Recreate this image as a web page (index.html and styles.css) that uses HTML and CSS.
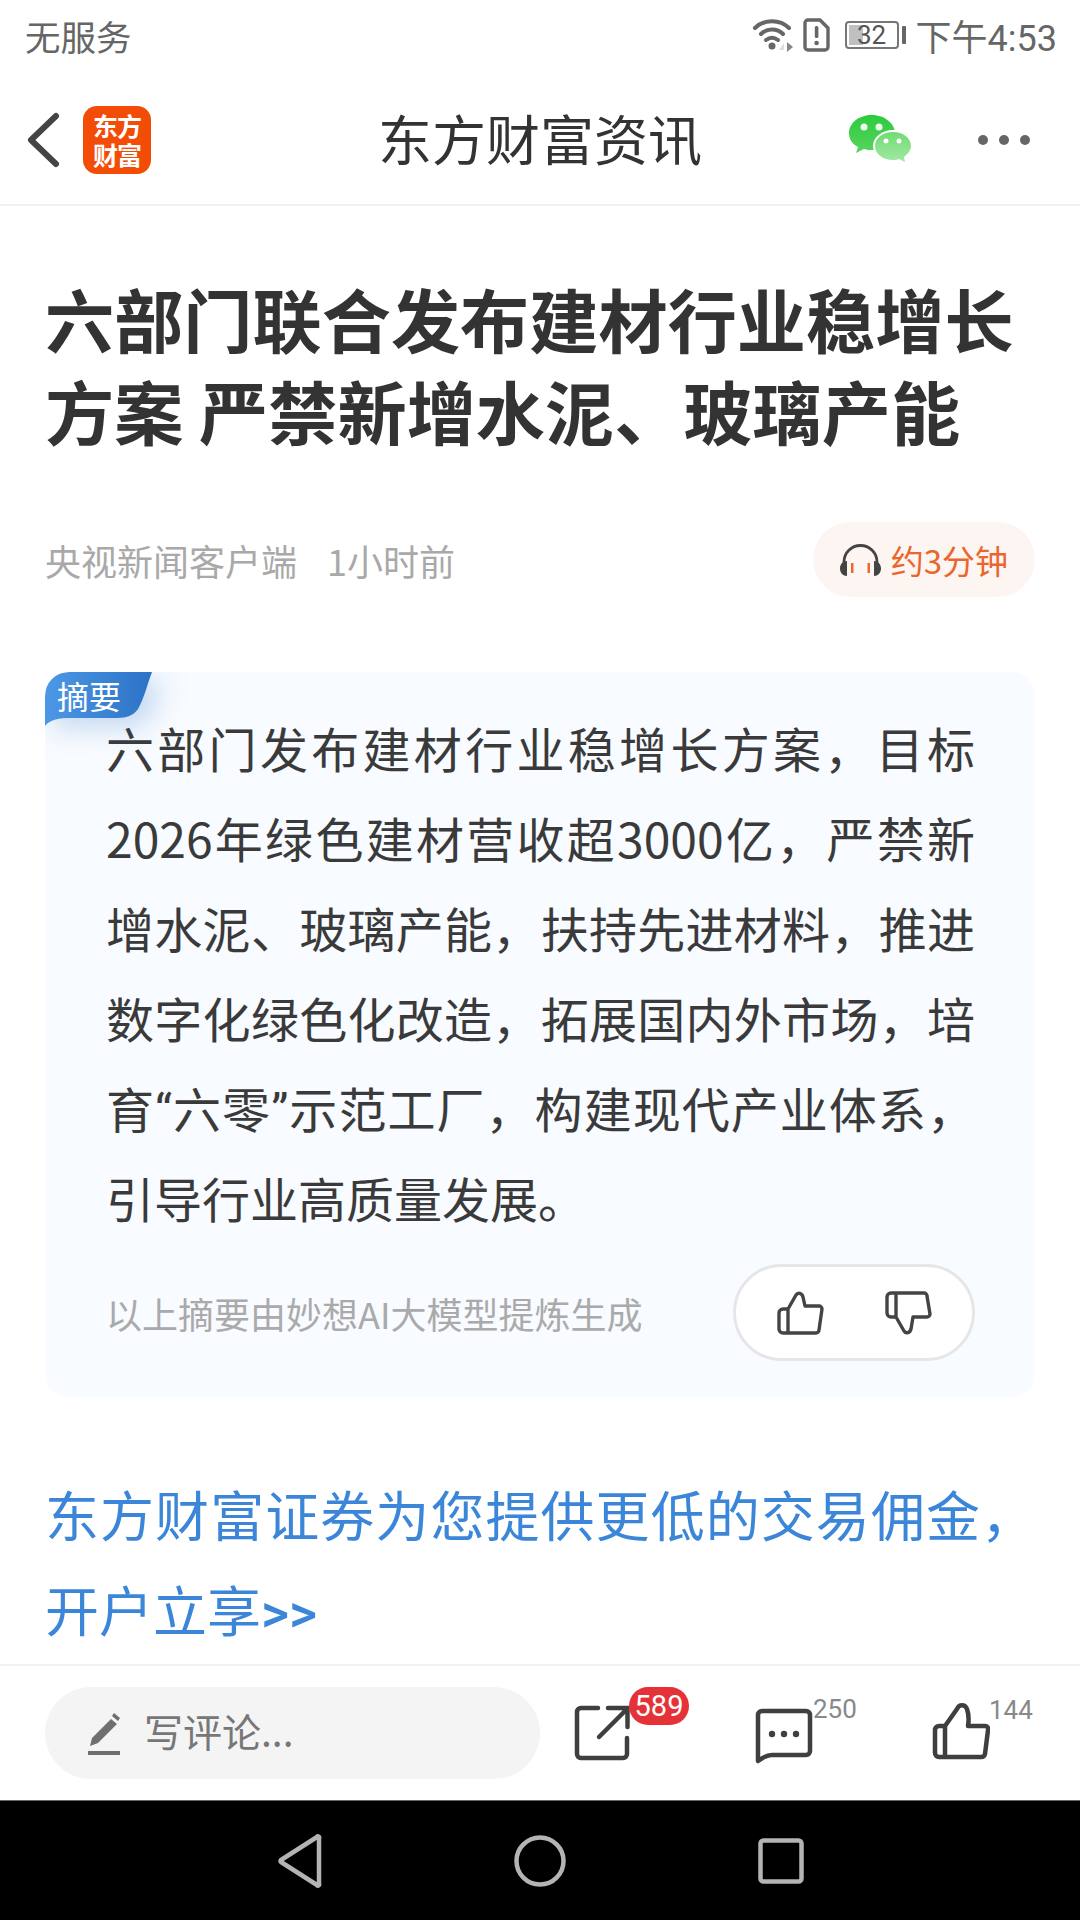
FILE: index.html
```html
<!DOCTYPE html>
<html lang="zh-CN">
<head>
<meta charset="utf-8">
<title>东方财富资讯</title>
<link rel="stylesheet" href="styles.css">
</head>
<body>
<div class="screen">
  <div class="status">
    <span class="carrier">无服务</span>
    <div class="status-right">
      <svg class="ic-wifi" width="42" height="36" viewBox="0 0 42 36"><g fill="none" stroke="#666" stroke-width="4" stroke-linecap="round"><path d="M3 11C12 2 28 2 37 11"/><path d="M9 17C15 11 25 11 31 17"/><path d="M14 23C18 20 22 20 26 23"/></g><circle cx="20" cy="29" r="3.5" fill="#666"/><path d="M27 33l5-7v7z" fill="#ddd"/><path d="M35 25l6 5-6 5z" fill="#888"/></svg>
      <svg class="ic-sim" width="27" height="34" viewBox="0 0 27 34"><path d="M5 2h12l8 8v19a3 3 0 0 1-3 3H5a3 3 0 0 1-3-3V5a3 3 0 0 1 3-3z" fill="none" stroke="#666" stroke-width="3.4"/><rect x="11.800" y="8" width="3.600" height="12" rx="1.500" fill="#666"/><circle cx="13.600" cy="25" r="2.300" fill="#666"/></svg>
      <div class="battery"><div class="batt-body"><span class="batt-fill"></span><span class="batt-num">32</span></div><span class="batt-cap"></span></div>
      <span class="clock">下午4:53</span>
    </div>
  </div>

  <div class="nav">
    <div class="nav-left">
      <svg width="36" height="56" viewBox="0 0 36 56"><path d="M31 4L6 28l25 24" fill="none" stroke="#444" stroke-width="6" stroke-linecap="round" stroke-linejoin="round"/></svg>
      <div class="logo"><span>东方</span><span>财富</span></div>
    </div>
    <h1 class="nav-title">东方财富资讯</h1>
    <div class="nav-right">
      <svg width="66" height="56" viewBox="0 0 66 56"><defs><linearGradient id="g1" x1="0" y1="0" x2="0" y2="1"><stop offset="0" stop-color="#2ccb3d"/><stop offset="1" stop-color="#59d45f"/></linearGradient><linearGradient id="g2" x1="0" y1="0" x2="0" y2="1"><stop offset="0" stop-color="#6fdc72"/><stop offset="1" stop-color="#a3e9a3"/></linearGradient></defs><path d="M24 3C11 3 1 11 1 21c0 6 3 11 9 14l-2 6 8-4c3 1 5 1 8 1 13 0 23-8 23-17S37 3 24 3z" fill="url(#g1)"/><circle cx="16" cy="15" r="3.500" fill="#fff" opacity=".9"/><circle cx="31" cy="15" r="3.500" fill="#fff" opacity=".9"/><path d="M45 18c-11 0-20 7-20 16s9 16 20 16c2 0 4 0 6-1l7 4-2-6c5-3 8-8 8-13 0-9-8-16-19-16z" fill="#fff"/><path d="M45 20c-10 0-18 6-18 14s8 14 18 14c2 0 4 0 6-1l6 3-1-5c4-3 7-7 7-11 0-8-8-14-18-14z" fill="url(#g2)"/><circle cx="38" cy="29" r="2.500" fill="#fff"/><circle cx="51" cy="29" r="2.500" fill="#fff"/></svg>
      <div class="dots"><i></i><i></i><i></i></div>
    </div>
  </div>

  <main class="article">
    <h2 class="headline">六部门联合发布建材行业稳增长<br>方案 严禁新增水泥、玻璃产能</h2>
    <div class="meta">
      <span class="source">央视新闻客户端</span>
      <span class="time">1小时前</span>
      <div class="listen">
        <svg width="41" height="34" viewBox="0 0 41 34"><path d="M4 24V19a16.500 16.500 0 0 1 33 0v5" fill="none" stroke="#444" stroke-width="2.800"/><path d="M7 18v15c-4 0-7-3-7-7.500S3 18 7 18zM34 18v15c4 0 7-3 7-7.500S38 18 34 18z" fill="#444"/><rect x="11" y="20" width="2.500" height="10" fill="#ea6a2e"/><rect x="27.500" y="20" width="2.500" height="10" fill="#ea6a2e"/></svg>
        <span>约3分钟</span>
      </div>
    </div>

    <section class="summary">
      <div class="summary-tag">
        <svg class="tag-shape" width="108" height="56" viewBox="0 0 108 56"><defs><linearGradient id="tagfill" x1="0" y1="0" x2="1" y2="0"><stop offset="0" stop-color="#4d98e6"/><stop offset="1" stop-color="#2c72c6"/></linearGradient></defs><path d="M0 24Q0 0 24 0H107C102 13 99 27 93 37 89 43 82 46 72 46H22C10 46 3 50 0 54z" fill="url(#tagfill)"/></svg>
        <span class="tag-label">摘要</span>
      </div>
      <p class="summary-text">
        <span>六部门发布建材行业稳增长方案，目标</span>
        <span>2026年绿色建材营收超3000亿，严禁新</span>
        <span>增水泥、玻璃产能，扶持先进材料，推进</span>
        <span>数字化绿色化改造，拓展国内外市场，培</span>
        <span>育<b class="latin">“</b>六零<b class="latin">”</b>示范工厂，构建现代产业体系，</span>
        <span class="last">引导行业高质量发展。</span>
      </p>
      <div class="summary-foot">
        <span class="ai-note">以上摘要由妙想AI大模型提炼生成</span>
        <div class="vote">
          <svg width="48" height="48" viewBox="0 0 48 48"><path d="M12 20h-5a4 4 0 0 0-4 4v16a4 4 0 0 0 4 4h33a3 3 0 0 0 3-3l3-21a3 3 0 0 0-3-3H29l-2-9c-1-4-5-5-7-2zM12 20v24" fill="none" stroke="#444" stroke-width="3.400" stroke-linejoin="round"/></svg>
          <svg width="48" height="48" viewBox="0 0 48 48"><path d="M36 28h5a4 4 0 0 0 4-4V8a4 4 0 0 0-4-4H8a3 3 0 0 0-3 3L2 25a3 3 0 0 0 3 3h14l2 12c1 4 5 5 7 2zM13 4v0M36 28V4" transform="matrix(-1 0 0 1 48 0)" fill="none" stroke="#444" stroke-width="3.400" stroke-linejoin="round"/></svg>
        </div>
      </div>
    </section>

    <p class="promo"><span class="promo-line">东方财富证券为您提供更低的交易佣金，</span><span>开户立享<b class="latin">&gt;&gt;</b></span></p>
  </main>

  <div class="toolbar">
    <div class="comment-input">
      <svg width="38" height="46" viewBox="0 0 38 46"><path d="M26 9l6 5L13 33l-8 3 2-8zM29 3l6 5-2 3-6-5z" fill="#6f6f6f"/><rect x="3" y="41" width="32" height="4" fill="#6f6f6f"/></svg>
      <span>写评论...</span>
    </div>
    <div class="tool tool-share">
      <svg width="58" height="58" viewBox="0 0 58 58"><path d="M24 4H7a4 4 0 0 0-4 4v42a4 4 0 0 0 4 4h42a4 4 0 0 0 4-4V34" fill="none" stroke="#3f3f3f" stroke-width="4.500" stroke-linecap="round"/><path d="M25 33L53 5M34 4h19.500v19" fill="none" stroke="#3f3f3f" stroke-width="4.500" stroke-linecap="round"/></svg>
      <span class="badge">589</span>
    </div>
    <div class="tool tool-comment">
      <svg width="58" height="56" viewBox="0 0 58 56"><path d="M7 3h44a4 4 0 0 1 4 4v36a4 4 0 0 1-4 4H17c-5 0-10 3-14 6V7a4 4 0 0 1 4-4z" fill="none" stroke="#3f3f3f" stroke-width="4.500" stroke-linejoin="round"/><circle cx="17" cy="26" r="3.200" fill="#3f3f3f"/><circle cx="29" cy="26" r="3.200" fill="#3f3f3f"/><circle cx="41" cy="26" r="3.200" fill="#3f3f3f"/></svg>
      <span class="count">250</span>
    </div>
    <div class="tool tool-like">
      <svg width="58" height="58" viewBox="0 0 58 58"><path d="M13 24H7a4 4 0 0 0-4 4v23a4 4 0 0 0 4 4h42a4 4 0 0 0 4-3l3-24a3 3 0 0 0-3-4H36c1-6 1-11-1-17-2-5-8-5-10 0zM13 24v31" fill="none" stroke="#3f3f3f" stroke-width="4.500" stroke-linejoin="round"/></svg>
      <span class="count">144</span>
    </div>
  </div>

  <div class="sysnav">
    <svg width="44" height="54" viewBox="0 0 44 54"><path d="M39 3a1 1 0 0 1 2 1v46a1 1 0 0 1-2 1L3 28a1.500 1.500 0 0 1 0-2z" fill="none" stroke="#b4b4b4" stroke-width="4.500" stroke-linejoin="round"/></svg>
    <svg width="52" height="52" viewBox="0 0 52 52"><circle cx="26" cy="26" r="23.500" fill="none" stroke="#b4b4b4" stroke-width="4.500"/></svg>
    <svg width="46" height="46" viewBox="0 0 46 46"><rect x="2.500" y="2.500" width="41" height="41" rx="3" fill="none" stroke="#b4b4b4" stroke-width="4.500"/></svg>
  </div>
</div>
</body>
</html>
```

FILE: styles.css
```css
* { box-sizing: border-box; margin: 0; padding: 0; }
html, body { width: 1080px; height: 1920px; overflow: hidden; background: #fff; }
body { font-family: "Noto Sans CJK SC", "Noto Sans", sans-serif; color: #333; }
.screen { width: 1080px; height: 1920px; display: flex; flex-direction: column; }
.latin { font-family: Roboto, sans-serif; font-weight: 400; line-height: 1; }

.status { height: 70px; flex: none; display: flex; align-items: center; justify-content: space-between; padding: 0 23px 0 25px; color: #666; font-size: 35.500px; }
.status-right { display: flex; align-items: center; }
.ic-wifi { margin-right: 9px; }
.ic-sim { margin-right: 15px; }
.battery { display: flex; align-items: center; margin-right: 10px; }
.batt-body { width: 54px; height: 28px; border: 2px solid #777; border-radius: 4px; position: relative; display: flex; align-items: center; justify-content: center; }
.batt-fill { position: absolute; left: 2px; top: 2px; bottom: 2px; width: 14px; background: #c0c0c0; }
.batt-num { position: relative; font-family: Roboto, sans-serif; font-size: 26px; line-height: 1; color: #555; }
.batt-cap { width: 4px; height: 18px; background: #666; margin-left: 3px; border-radius: 1px; }
.clock { font-family: Roboto, "Noto Sans CJK SC", sans-serif; font-size: 36px; color: #666; }

.nav { height: 136px; flex: none; border-bottom: 2px solid #f0f0f0; display: grid; grid-template-columns: 1fr auto 1fr; align-items: center; padding: 6px 25px 0; }
.nav-left { display: flex; align-items: center; gap: 22px; }
.logo { width: 68px; height: 68px; border-radius: 14px; background: #f24c06; color: #fff; display: flex; flex-direction: column; align-items: center; justify-content: center; font-size: 25px; font-weight: 700; line-height: 29px; letter-spacing: -1px; }
.nav-title { font-size: 54px; line-height: 70px; font-weight: 400; color: #333; padding-bottom: 4px; }
.nav-right { display: flex; align-items: center; justify-content: flex-end; gap: 64px; padding-right: 25px; }
.dots { display: flex; gap: 11px; }
.dots i { width: 10px; height: 10px; border-radius: 50%; background: #666; display: block; }

.article { flex: 1; min-height: 0; overflow: hidden; padding: 66px 45px 0 45px; }
.headline { font-size: 69.200px; line-height: 92px; font-weight: 700; color: #333; white-space: nowrap; }
.meta { display: flex; align-items: center; margin-top: 66px; height: 75px; font-size: 36px; color: #a9a9a9; }
.source { margin-right: 30px; }
.listen { margin-left: auto; height: 75px; padding: 0 27px; border-radius: 38px; background: #fdf5f1; display: flex; align-items: center; gap: 10px; color: #e9662c; font-size: 33px; }

.summary { margin: 75px 0 0; height: 725px; padding: 30px 60px 0 61px; background: #f8fbff; border-radius: 24px; position: relative; overflow: hidden; }
.summary-tag { position: absolute; left: 0; top: 0; width: 108px; height: 56px; }
.tag-shape { display: block; filter: drop-shadow(10px 8px 14px rgba(47, 117, 200, .28)); }
.tag-label { position: absolute; left: 12px; top: 0; color: #fff; font-size: 32px; line-height: 46px; }
.summary-text { font-size: 48px; line-height: 90px; color: #3a3a3a; }
.summary-text span { display: block; text-align: justify; text-align-last: justify; white-space: nowrap; }
.summary-text span.last { text-align-last: left; }
.summary-foot { display: flex; align-items: center; justify-content: space-between; margin-top: 22px; }
.ai-note { font-size: 36px; color: #aaa; }
.vote { width: 242px; height: 97px; border-radius: 49px; background: #fff; border: 3px solid #e6e6e6; display: flex; align-items: center; justify-content: center; gap: 60px; }

.promo { margin-top: 69px; font-size: 54px; line-height: 95px; color: #3b86d8; white-space: nowrap; }
.promo span { display: block; }
.promo .promo-line { text-align: justify; text-align-last: justify; }
.promo .latin { font-weight: 500; }

.toolbar { height: 136px; flex: none; border-top: 2px solid #f1f1f1; display: flex; align-items: center; padding: 0 0 0 45px; }
.comment-input { width: 495px; height: 92px; border-radius: 46px; background: #f4f4f4; display: flex; align-items: center; gap: 21px; padding: 0 0 0 40px; font-size: 39px; line-height: 56px; color: #777; }
.comment-input span { margin-top: -6px; }
.tool { position: relative; display: flex; }
.tool-share { margin-left: 34px; margin-top: 0; }
.tool-comment { margin-left: 123px; margin-top: 5px; }
.tool-like { margin-left: 119px; margin-top: -4px; }
.badge { position: absolute; left: 55px; top: -17px; width: 60px; height: 38px; border-radius: 19px; background: #e53238; color: #fff; font-family: Roboto, sans-serif; font-size: 29px; line-height: 38px; text-align: center; }
.count { position: absolute; left: 58px; font-family: Roboto, sans-serif; font-size: 26px; line-height: 30px; color: #888; }
.tool-comment .count { top: -14px; }
.tool-like .count { top: -7px; left: 57px; }

.sysnav { height: 120px; flex: none; background: #000; border-top: 1px solid #666; display: flex; align-items: center; padding-left: 278px; }
.sysnav svg:nth-child(2) { margin-left: 192px; }
.sysnav svg:nth-child(3) { margin-left: 192px; }
```
